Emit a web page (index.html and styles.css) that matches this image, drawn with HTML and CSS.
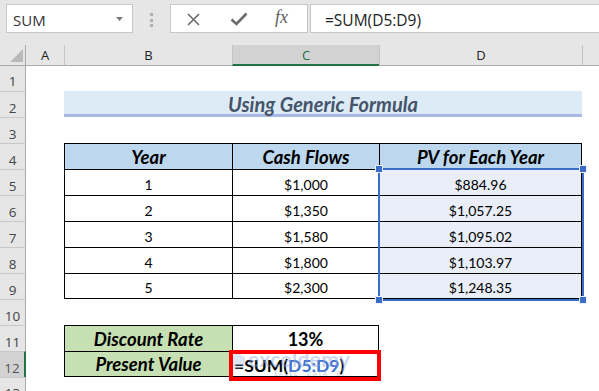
FILE: index.html
```html
<!DOCTYPE html>
<html>
<head>
<meta charset="utf-8">
<link rel="stylesheet" href="styles.css">
</head>
<body>
<div class="app">
  <div class="toolbar">
    <div class="namebox"><span class="nb-text">SUM</span>
      <svg class="nb-arrow" width="7" height="4" viewBox="0 0 7 4"><path d="M0 0H7L3.5 4Z" fill="#7a7a7a"/></svg>
    </div>
    <div class="grip"><i></i><i></i><i></i></div>
    <div class="fxbox">
      <svg class="ic-x" width="13" height="13" viewBox="0 0 13 13"><path d="M1 1L12 12M12 1L1 12" stroke="#6b6b6b" stroke-width="1.6" fill="none"/></svg>
      <svg class="ic-check" width="18" height="14" viewBox="0 0 18 14"><path d="M1.5 7.5L6.5 12L16.5 1.5" stroke="#6b6b6b" stroke-width="2.6" fill="none"/></svg>
      <span class="fx">fx</span>
    </div>
    <div class="formula"><span class="formula-text">=SUM(D5:D9)</span></div>
  </div>

  <div class="sheet">
    <!-- header row -->
    <div class="corner"><svg width="26" height="21" viewBox="0 0 26 21"><path d="M10 17L23 4V17Z" fill="#b9b9b9"/></svg></div>
    <div class="ch">A</div>
    <div class="ch bl">B</div>
    <div class="ch bl csel">C</div>
    <div class="ch bl">D</div>
    <div class="ch bl"></div>

    <!-- row 1 -->
    <div class="rh first">1</div><div></div><div></div><div></div><div></div><div></div>

    <!-- row 2 -->
    <div class="rh">2</div><div></div>
    <div class="c title">Using Generic Formula</div>
    <div></div>

    <!-- row 3 -->
    <div class="rh">3</div><div></div><div></div><div></div><div></div><div></div>

    <!-- row 4 -->
    <div class="rh">4</div><div></div>
    <div class="c th t l">Year</div>
    <div class="c th t l">Cash Flows</div>
    <div class="c th t l r">PV for Each Year</div>
    <div></div>

    <!-- row 5 -->
    <div class="rh">5</div><div></div>
    <div class="c td t l">1</div>
    <div class="c td t l">$1,000</div>
    <div class="c td sel t l r anchor">$884.96
      <div class="selbox"><i class="h tl"></i><i class="h tr"></i><i class="h bl2"></i><i class="h br2"></i></div>
    </div>
    <div></div>

    <!-- row 6 -->
    <div class="rh">6</div><div></div>
    <div class="c td t l">2</div>
    <div class="c td t l">$1,350</div>
    <div class="c td sel t l r">$1,057.25</div>
    <div></div>

    <!-- row 7 -->
    <div class="rh">7</div><div></div>
    <div class="c td t l">3</div>
    <div class="c td t l">$1,580</div>
    <div class="c td sel t l r">$1,095.02</div>
    <div></div>

    <!-- row 8 -->
    <div class="rh">8</div><div></div>
    <div class="c td t l">4</div>
    <div class="c td t l">$1,800</div>
    <div class="c td sel t l r">$1,103.97</div>
    <div></div>

    <!-- row 9 -->
    <div class="rh">9</div><div></div>
    <div class="c td t l b">5</div>
    <div class="c td t l b">$2,300</div>
    <div class="c td sel t l r b">$1,248.35</div>
    <div></div>

    <!-- row 10 -->
    <div class="rh">10</div><div></div><div></div><div></div><div></div><div></div>

    <!-- row 11 -->
    <div class="rh">11</div><div></div>
    <div class="c lab t l">Discount Rate</div>
    <div class="c val t l r">13%</div>
    <div></div><div></div>

    <!-- row 12 -->
    <div class="rh rsel">12</div><div></div>
    <div class="c lab t l b">Present Value</div>
    <div class="edit t l r b anchor">=SUM(<span class="ref">D5:D9</span>)
      <div class="wm"><span class="wm-logo"></span><span class="wm-text">exceldemy</span><span class="wm-sub">EXCEL · DATA · BI</span></div>
      <div class="redbox"></div>
    </div>
    <div></div><div></div>

    <!-- row 13 -->
    <div class="rh">13</div><div></div><div></div><div></div><div></div><div></div>
  </div>
</div>
</body>
</html>
```

FILE: styles.css
```css
* {
  box-sizing: border-box;
  margin: 0;
  padding: 0;
}

body {
  margin: 0;
  width: 599px;
  height: 391px;
  overflow: hidden;
  background: #ffffff;
  font-family: Lato, "Open Sans", sans-serif;
  color: #000;
}

.app {
  display: flex;
  flex-direction: column;
  height: 391px;
}

/* ---------- toolbar ---------- */
.toolbar {
  height: 45px;
  flex: none;
  background: #e6e6e6;
  display: flex;
  align-items: flex-start;
  padding: 4px 0 0 6px;
}

.namebox {
  flex: none;
  width: 127px;
  height: 29px;
  background: #fff;
  border: 1px solid #c8c8c8;
  display: flex;
  align-items: center;
  justify-content: space-between;
  padding: 2px 9px 0 6px;
  font: 15px "Open Sans", sans-serif;
  color: #333;
}

.nb-arrow {
  margin-top: -2px;
}

.grip {
  flex: none;
  width: 37px;
  height: 29px;
  display: flex;
  flex-direction: column;
  align-items: center;
  gap: 2.5px;
  padding-top: 9px;
}

.grip i {
  display: block;
  width: 3px;
  height: 3px;
  background: #b0b0b0;
}

.fxbox {
  flex: none;
  width: 138px;
  height: 29px;
  background: #fff;
  border: 1px solid #c8c8c8;
  display: flex;
  align-items: center;
  padding-left: 16px;
}

.ic-x {
  flex: none;
  margin-top: 1px;
}

.ic-check {
  flex: none;
  margin-left: 30px;
}

.fx {
  margin-left: 27px;
  font: italic 18px "Liberation Serif", serif;
  color: #5e5e5e;
  margin-top: -2px;
}

.formula {
  flex: 1 1 auto;
  min-width: 0;
  margin-left: 2px;
  height: 29px;
  background: #fff;
  border: 1px solid #c8c8c8;
  border-right: none;
  display: flex;
  align-items: center;
  padding-top: 2px;
  font: 15.5px "Open Sans", sans-serif;
  color: #222;
}

.formula-text {
  margin-left: 14px;
}

/* ---------- sheet ---------- */
.sheet {
  flex: 1;
  display: grid;
  grid-template-columns: 26px 38px 168px 147px 203px 17px;
  grid-template-rows: 21px 25px repeat(11, 26px) 1fr;
  background: #fff;
}

.corner {
  background: #e6e6e6;
  border-right: 1px solid #ababab;
  border-bottom: 1px solid #ababab;
}

.corner svg {
  display: block;
}

.ch {
  background: #e6e6e6;
  border-bottom: 1px solid #ababab;
  display: flex;
  align-items: center;
  justify-content: center;
  font: 13px "Open Sans", sans-serif;
  color: #222;
}

.ch.bl {
  border-left: 1px solid #c4c4c4;
}

.ch.csel {
  background: #d2d2d2;
  border-bottom: 2px solid #217346;
  color: #217346;
}

.rh {
  background: #e6e6e6;
  border-right: 1px solid #ababab;
  border-top: 1px solid #c8c8c8;
  display: flex;
  justify-content: center;
  align-items: center;
  padding-top: 6px;
  font: 13.5px "Open Sans", sans-serif;
  color: #444;
}

.rh.first {
  border-top: none;
  padding-top: 5px;
}

.rh.rsel {
  background: #d2d2d2;
  border-right: 2px solid #217346;
  color: #555;
}

/* cells */
.c {
  display: flex;
  align-items: center;
  justify-content: center;
  white-space: nowrap;
}

.t { border-top: 1px solid #000; }
.l { border-left: 1px solid #000; }
.r { border-right: 1px solid #000; }
.b { border-bottom: 1px solid #000; }

.title {
  grid-column: span 3;
  background: #ddebf7;
  border-bottom: 3px solid #a6bae3;
  font: italic 700 20px Lato, sans-serif;
  color: #44546a;
  padding-top: 2px;
}

.th {
  background: #bdd7ee;
  font: italic 700 18.5px Lato, sans-serif;
}

.td {
  font: 14px Lato, sans-serif;
  padding-top: 3px;
}

.sel {
  background: #e9eef8;
}

.lab {
  background: #c6e0b4;
  font: italic 700 18.5px Lato, sans-serif;
}

.val {
  font: 700 18px Lato, sans-serif;
}

.anchor {
  position: relative;
}

.selbox {
  position: absolute;
  left: -2px;
  top: -2px;
  width: 206px;
  height: 133px;
  border: 2px solid #3a6dc8;
  pointer-events: none;
  z-index: 2;
}

.selbox .h {
  position: absolute;
  width: 6px;
  height: 6px;
  background: #3a6dc8;
  outline: 1px solid #e9eef8;
}

.selbox .tl { left: -4px; top: -4px; }
.selbox .tr { right: -4px; top: -4px; }
.selbox .bl2 { left: -4px; bottom: -4px; }
.selbox .br2 { right: -4px; bottom: -4px; }

.edit {
  display: flex;
  align-items: center;
  padding: 3px 0 0 1px;
  font: 700 17.5px Lato, sans-serif;
  white-space: nowrap;
}

.ref {
  color: #3d6fd1;
}

.wm {
  position: absolute;
  left: -3px;
  top: 0;
  width: 145px;
  height: 24px;
  pointer-events: none;
}

.wm-logo {
  position: absolute;
  left: 0;
  top: 1px;
  width: 15px;
  height: 17px;
  background: rgba(150, 170, 215, 0.3);
  clip-path: polygon(50% 0, 100% 25%, 100% 75%, 50% 100%, 0 75%, 0 25%);
}

.wm-text {
  position: absolute;
  left: 18px;
  top: -6px;
  font: 700 21px Lato, sans-serif;
  color: rgba(140, 165, 220, 0.45);
  letter-spacing: 0.3px;
}

.wm-sub {
  position: absolute;
  left: 44px;
  top: 17px;
  font: 700 6.5px "Open Sans", sans-serif;
  color: rgba(150, 160, 190, 0.4);
  letter-spacing: 1px;
}

.redbox {
  position: absolute;
  left: -4px;
  top: -2px;
  width: 152px;
  height: 31px;
  border: 4px solid #ff0000;
  pointer-events: none;
  z-index: 3;
}
```
